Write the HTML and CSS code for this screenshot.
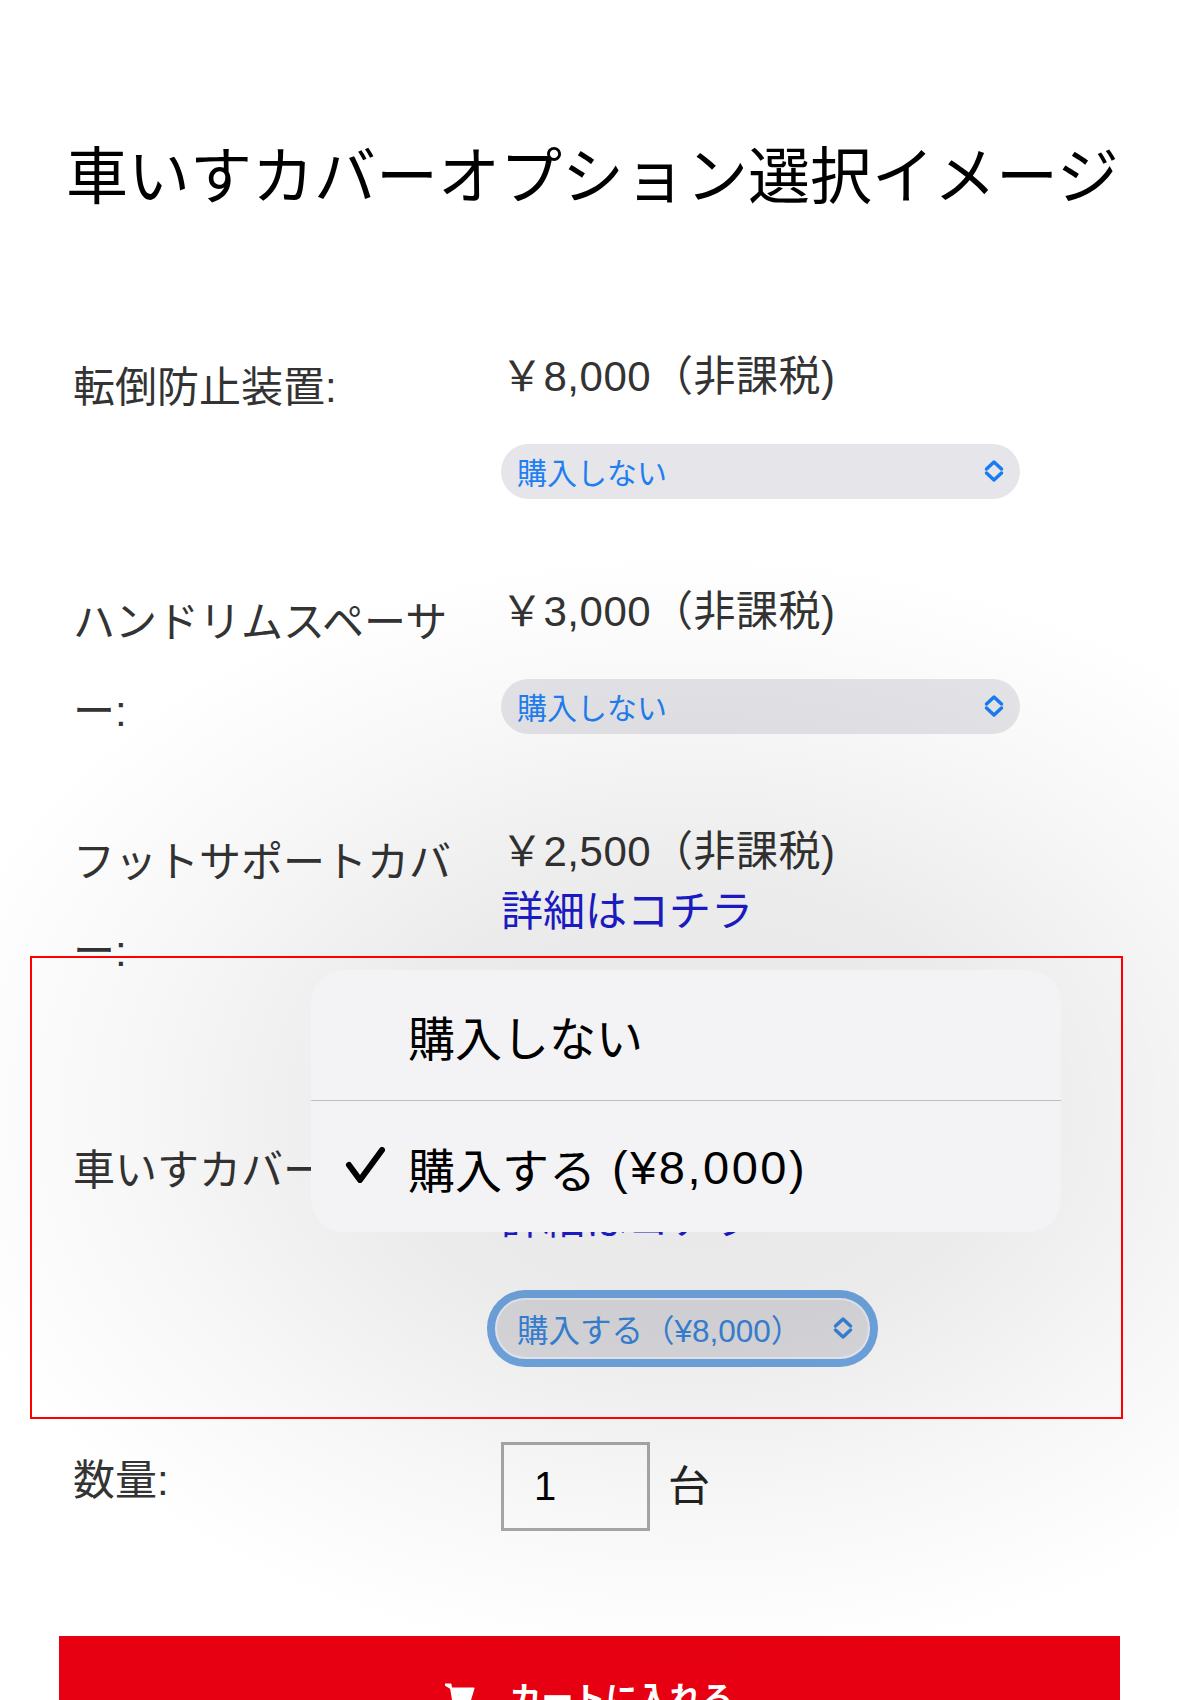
FILE: index.html
```html
<!DOCTYPE html>
<html lang="ja">
<head>
<meta charset="utf-8">
<title>車いすカバーオプション選択イメージ</title>
<link rel="stylesheet" href="styles.css">
</head>
<body>
<div class="page">
  <h1 class="title">車いすカバーオプション選択イメージ</h1>
  <div class="options">
    <div class="row">
      <div class="label">転倒防止装置:</div>
      <div class="value">
        <div class="price">￥8,000（非課税)</div>
        <div class="select"><span>購入しない</span><svg class="chev" viewBox="0 0 20 24" width="20" height="24"><path d="M2.5 10 L10 3 L17.5 10 M2.5 14 L10 21 L17.5 14"/></svg></div>
      </div>
    </div>
    <div class="row">
      <div class="label">ハンドリムスペーサー:</div>
      <div class="value">
        <div class="price">￥3,000（非課税)</div>
        <div class="select"><span>購入しない</span><svg class="chev" viewBox="0 0 20 24" width="20" height="24"><path d="M2.5 10 L10 3 L17.5 10 M2.5 14 L10 21 L17.5 14"/></svg></div>
      </div>
    </div>
    <div class="row row-tight">
      <div class="label">フットサポートカバー:</div>
      <div class="value">
        <div class="price">￥2,500（非課税)</div>
        <a class="link" href="#">詳細はコチラ</a>
        <div class="select"><span>購入しない</span><svg class="chev" viewBox="0 0 20 24" width="20" height="24"><path d="M2.5 10 L10 3 L17.5 10 M2.5 14 L10 21 L17.5 14"/></svg></div>
      </div>
    </div>
    <div class="row">
      <div class="label">車いすカバー:</div>
      <div class="value">
        <div class="price">￥8,000（非課税)</div>
        <a class="link" href="#">詳細はコチラ</a>
        <div class="select select-focus"><span>購入する（¥8,000）</span><svg class="chev" viewBox="0 0 20 24" width="20" height="24"><path d="M2.5 10 L10 3 L17.5 10 M2.5 14 L10 21 L17.5 14"/></svg></div>
      </div>
    </div>
    <div class="row qty-row">
      <div class="label">数量:</div>
      <div class="value qty-value">
        <input class="qty-input" type="text" value="1">
        <span class="unit">台</span>
      </div>
    </div>
  </div>
  <button class="cart-btn" type="button">
    <svg class="cart-icon" viewBox="0 0 30 28" width="30" height="28"><path d="M0 1.5 H5.5 L8 17 H25 L28.5 5.5 H6.5 Z" fill="#fff" stroke="#fff" stroke-width="2" stroke-linejoin="round"/><circle cx="10" cy="23.5" r="2.8" fill="#fff"/><circle cx="23" cy="23.5" r="2.8" fill="#fff"/></svg>
    <span>カートに入れる</span>
  </button>
</div>

<div class="dim"></div>
<div class="popup">
  <div class="opt">購入しない</div>
  <div class="opt opt-selected">
    <svg class="check" viewBox="0 0 40 36" width="40" height="36"><path d="M4 18 L15 33 L37 3"/></svg>
    <span>購入する</span><span class="opt-price">(¥8,000)</span>
  </div>
</div>
<div class="mark"></div>
</body>
</html>
```

FILE: styles.css
```css
html, body {
  margin: 0;
  padding: 0;
  background: #ffffff;
}
body {
  font-family: "Liberation Sans", "Noto Sans CJK JP", sans-serif;
  width: 1179px;
  height: 1700px;
  overflow: hidden;
  position: relative;
}
.page {
  padding: 0 59px;
}
.title {
  margin: 138px 0 0;
  padding-left: 7px;
  font-size: 62px;
  line-height: 80px;
  font-weight: 400;
  color: #000;
  white-space: nowrap;
}
.options {
  margin-top: 124.5px;
}
.row {
  display: flex;
  padding-left: 14px;
}
.row + .row {
  margin-top: 79px;
}
.row + .row-tight {
  margin-top: 62px;
}
.label {
  width: 404px;
  padding-right: 24px;
  flex: none;
  font-size: 42px;
  line-height: 89px;
  color: #333;
  line-break: loose;
}
.value {
  flex: 1;
  padding-top: 4px;
}
.price {
  font-size: 42px;
  line-height: 60px;
  color: #333;
  white-space: nowrap;
  letter-spacing: 0.5px;
}
.link {
  display: block;
  font-size: 42px;
  line-height: 60px;
  color: #1c1cd0;
  text-decoration: none;
}
.select {
  margin-top: 37px;
  width: 519px;
  height: 55px;
  box-sizing: border-box;
  border-radius: 28px;
  background: #e6e6ea;
  display: flex;
  align-items: center;
  justify-content: space-between;
  padding: 0 16px 0 16px;
  font-size: 30px;
  color: #1f7ff0;
}
.link + .select {
  margin-top: 50px;
}
.chev {
  flex: none;
  fill: none;
  stroke: #1a7cf2;
  stroke-width: 3.5;
  stroke-linecap: round;
  stroke-linejoin: round;
}
.select-focus {
  width: 371px;
  height: 57px;
  margin-left: -4px;
  margin-top: 47px;
  background: #e1e1e5;
  color: #3a86dc;
  padding: 0 15px 0 20px;
  font-size: 31.5px;
  box-shadow: 0 0 0 2px #eef2f8, 0 0 0 10px #73a9e6;
}
.select-focus .chev {
  stroke: #3a86dc;
}
.qty-value {
  display: flex;
  align-items: center;
  padding-top: 6.5px;
}
.qty-input {
  width: 149px;
  height: 89px;
  box-sizing: border-box;
  border: 3px solid #a9a9a9;
  background: #fff;
  margin: 0;
  padding: 0 0 0 30px;
  font-family: "Liberation Sans", "Noto Sans CJK JP", sans-serif;
  font-size: 40px;
  color: #000;
}
.unit {
  margin-left: 18px;
  margin-top: -8px;
  font-size: 42px;
  color: #222;
}
.cart-btn {
  display: flex;
  align-items: center;
  justify-content: center;
  gap: 34px;
  margin-top: 105px;
  width: 100%;
  height: 120px;
  border: 0;
  background: #e60012;
  color: #fff;
  font-family: "Liberation Sans", "Noto Sans CJK JP", sans-serif;
  font-size: 32px;
  font-weight: 700;
  padding: 0;
}
.cart-icon {
  margin-top: 2px;
}
.dim {
  position: absolute;
  left: 0;
  top: 0;
  width: 1179px;
  height: 1700px;
  background: radial-gradient(ellipse 780px 560px at 690px 1110px, rgba(0, 0, 0, 0.095) 0%, rgba(0, 0, 0, 0.08) 40%, rgba(0, 0, 0, 0.03) 72%, rgba(0, 0, 0, 0) 100%);
  z-index: 1;
  pointer-events: none;
}
.popup {
  position: absolute;
  left: 311px;
  top: 970px;
  width: 750px;
  height: 262px;
  border-radius: 33px;
  background: #f3f3f5;
  overflow: hidden;
  z-index: 2;
}
.opt {
  position: relative;
  height: 130px;
  display: flex;
  align-items: center;
  padding-left: 97px;
  font-size: 47px;
  color: #000;
}
.opt + .opt {
  border-top: 1.5px solid #bcbcbe;
  height: 130.5px;
  padding-top: 4px;
  box-sizing: border-box;
}
.opt-price {
  margin-left: 16px;
  letter-spacing: 2.5px;
}
.check {
  position: absolute;
  left: 34px;
  top: 46px;
  fill: none;
  stroke: #000;
  stroke-width: 6;
  stroke-linecap: round;
  stroke-linejoin: round;
}
.mark {
  position: absolute;
  left: 30px;
  top: 956px;
  width: 1093px;
  height: 463px;
  box-sizing: border-box;
  border: 2px solid #ff0000;
  z-index: 3;
  pointer-events: none;
}
```
